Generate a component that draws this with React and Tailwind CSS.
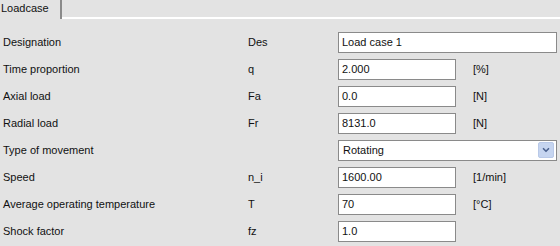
import { ChevronDown } from 'lucide-react';

const rows = [
    { label: 'Designation', sym: 'Des', value: 'Load case 1', wide: true },
    { label: 'Time proportion', sym: 'q', value: '2.000', unit: '[%]' },
    { label: 'Axial load', sym: 'Fa', value: '0.0', unit: '[N]' },
    { label: 'Radial load', sym: 'Fr', value: '8131.0', unit: '[N]' },
    { label: 'Type of movement', sym: '', value: 'Rotating', select: true },
    { label: 'Speed', sym: 'n_i', value: '1600.00', unit: '[1/min]' },
    { label: 'Average operating temperature', sym: 'T', value: '70', unit: '[°C]' },
    { label: 'Shock factor', sym: 'fz', value: '1.0' },
];

function Field({ row }) {
    if (row.select) {
        return (
            <div className="w-[219px] h-[21px] bg-white border border-[#8a8a8a] flex items-center justify-between pl-[4px] pr-[2px]">
                <span>{row.value}</span>
                <span className="w-[16px] h-[16px] bg-[#c6d5f0] border border-[#b9c9e8] rounded-[2px] flex items-center justify-center">
                    <ChevronDown size={10} strokeWidth={4} className="text-[#4d6390]" />
                </span>
            </div>
        );
    }
    return (
        <div className={`${row.wide ? 'w-[219px]' : 'w-[118px]'} h-[21px] bg-white border border-[#8a8a8a] flex items-center pl-[3px] pt-[1px]`}>
            {row.value}
        </div>
    );
}

export default function App() {
    return (
        <div className="w-[560px] h-[246px] bg-[#e3e3e3] text-[#111] text-[11px] overflow-hidden" style={{ fontFamily: '"Liberation Sans", Arial, sans-serif' }}>
            <div className="flex h-[19px]">
                <div className="w-[62px] border-r-2 border-[#8a8a8a] pl-[1px] pt-[2px] leading-[13px]">Loadcase</div>
                <div className="flex-1 border-b-2 border-white" />
            </div>
            <div className="mt-[9px]">
                {rows.map((row) => (
                    <div key={row.label} className="flex items-center h-[27px] pt-[1px]">
                        <div className="w-[248px] pl-[3px]">{row.label}</div>
                        <div className="w-[90px]">{row.sym}</div>
                        <Field row={row} />
                        {row.unit && <div className="ml-[17px]">{row.unit}</div>}
                    </div>
                ))}
            </div>
        </div>
    );
}
